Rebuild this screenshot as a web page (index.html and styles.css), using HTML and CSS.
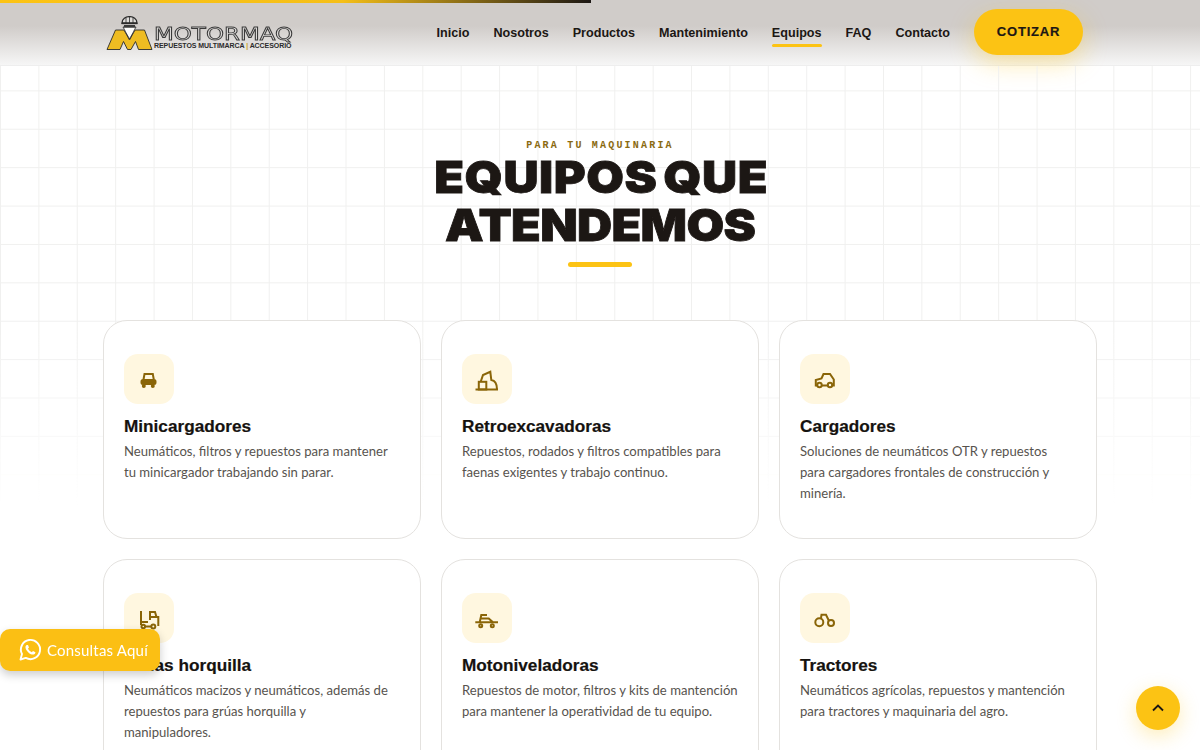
FILE: index.html
```html
<!DOCTYPE html>
<html lang="es">
<head>
    <meta charset="UTF-8">
    <meta name="viewport" content="width=device-width, initial-scale=1.0">
    <title>Motormaq - Equipos</title>
    <link rel="stylesheet" href="styles.css">
</head>
<body>
    <div class="progress"></div>
    <header class="site-header">
        <a class="logo" href="#">
            <svg class="logo-mark" viewBox="0 0 47 34" width="47" height="34">
                <path d="M1 33.5 L9.5 14 H18 L23.5 24 L29 14 H38.5 L46 33.5 H32.5 L29.5 25.5 L25 33.5 H21.5 L17.5 25.5 L14 33.5 Z" fill="#eebc22" stroke="#2b2b2b" stroke-width="0.9"/>
                <path d="M17 11 C18 13 19 14 19 15 L23.5 23 L28 15 C28 14 29 13 30 11 Z" fill="#fdfdfb" stroke="#2b2b2b" stroke-width="0.9"/>
                <path d="M16 7 C16 -1.5 31 -1.5 31 7 Z" fill="#dedcda" stroke="#2b2b2b" stroke-width="1.3"/>
                <path d="M23.5 0.5 V7 M20 1.5 V7 M27 1.5 V7" stroke="#2b2b2b" stroke-width="0.8"/>
                <path d="M15.5 7.5 H31.5" stroke="#2b2b2b" stroke-width="1.3"/>
                <path d="M18 9 H29 V11.5 H18 Z" fill="#3a3a3a"/>
            </svg>
            <span class="logo-text">
                <span class="logo-name">MOTORMAQ</span>
                <span class="logo-sub">REPUESTOS MULTIMARCA <i>|</i> ACCESORIO</span>
            </span>
        </a>
        <nav class="menu">
            <a href="#">Inicio</a>
            <a href="#">Nosotros</a>
            <a href="#">Productos</a>
            <a href="#">Mantenimiento</a>
            <a href="#" class="active">Equipos</a>
            <a href="#">FAQ</a>
            <a href="#">Contacto</a>
        </nav>
        <a class="quote-btn" href="#">COTIZAR</a>
    </header>

    <main class="equipment">
        <div class="grid-lines"></div>
        <p class="eyebrow">PARA TU MAQUINARIA</p>
        <h1 class="title">
            <span class="title-top">EQUIPOS QUE</span>
            <span class="title-bottom">ATENDEMOS</span>
        </h1>
        <div class="title-bar"></div>

        <section class="cards">
            <article class="card">
                <div class="card-icon">
                    <svg viewBox="0 0 24 24"><path d="M6.5 12.5 L7.5 7 H15.8 L16.8 12.5"/><rect x="4.5" y="13" width="14" height="4" rx="1.5" fill="#8a6508"/><circle cx="6.8" cy="19" r="1"/><circle cx="15.8" cy="19" r="1"/></svg>
                </div>
                <h3>Minicargadores</h3>
                <p>Neumáticos, filtros y repuestos para mantener tu minicargador trabajando sin parar.</p>
            </article>
            <article class="card">
                <div class="card-icon">
                    <svg viewBox="0 0 24 24"><path d="M0.5 22.5 H23"/><rect x="3.8" y="14.8" width="7.5" height="7.7"/><path d="M5.7 14.7 L8 8 L15.3 4.8 L16.3 13 C19.5 13.5 22 17 22 22.5"/></svg>
                </div>
                <h3>Retroexcavadoras</h3>
                <p>Repuestos, rodados y filtros compatibles para faenas exigentes y trabajo continuo.</p>
            </article>
            <article class="card">
                <div class="card-icon">
                    <svg viewBox="0 0 24 24"><path d="M4 18.5 H2.8 V13 L8.5 11.5 L10.5 7 H17 L20.8 12.5 V18.5 H19.5 M9 18.5 H14.5"/><circle cx="6.5" cy="18" r="2.2"/><circle cx="17" cy="18" r="2.2"/></svg>
                </div>
                <h3>Cargadores</h3>
                <p>Soluciones de neumáticos OTR y repuestos<br>para cargadores frontales de construcción y<br>minería.</p>
            </article>
            <article class="card">
                <div class="card-icon">
                    <svg viewBox="0 0 24 24"><path d="M4 5 V19 M4 16 H11 M13 14 V6 H18 L19.5 11 H21.3 V20 M13 11 H19.5 M9 20.5 H14"/><circle cx="6.3" cy="20.5" r="1.8"/><circle cx="16.3" cy="20.5" r="2"/></svg>
                </div>
                <h3>Grúas horquilla</h3>
                <p>Neumáticos macizos y neumáticos, además de<br>repuestos para grúas horquilla y<br>manipuladores.</p>
            </article>
            <article class="card">
                <div class="card-icon">
                    <svg viewBox="0 0 24 24"><path d="M0.3 16.3 H23 M4.7 16.3 L6.3 9 H12 M6 12.5 H13.7 L18 16.3"/><circle cx="5.7" cy="19.7" r="1.5"/><circle cx="17.3" cy="19.7" r="1.5"/></svg>
                </div>
                <h3>Motoniveladoras</h3>
                <p>Repuestos de motor, filtros y kits de mantención para mantener la operatividad de tu equipo.</p>
            </article>
            <article class="card">
                <div class="card-icon">
                    <svg viewBox="0 0 24 24"><circle cx="6.3" cy="16.3" r="4"/><circle cx="18" cy="17" r="3"/><path d="M8 12 L8.5 8.8 H13 L15.8 14.5"/></svg>
                </div>
                <h3>Tractores</h3>
                <p>Neumáticos agrícolas, repuestos y mantención para tractores y maquinaria del agro.</p>
            </article>
        </section>
    </main>

    <a class="whatsapp" href="#">
        <svg viewBox="0 0 24 24" width="24" height="24">
            <path d="M2.5 21.5 L4 16 A9.6 9.6 0 1 1 7.8 19.9 Z" fill="none" stroke="#fff" stroke-width="1.9" stroke-linejoin="round"/>
            <path d="M8.6 6.9 C8 7.4 7.3 8.3 7.5 9.7 C7.8 11.6 9.3 13.6 10.9 14.9 C12.4 16.1 14.2 16.9 15.6 16.5 C16.7 16.2 17.4 15.4 17.4 14.3 L15 13 L13.8 14.2 C12.2 13.6 10.7 12.1 10 10.5 L11 9.4 L10 6.9 Z" fill="#fff"/>
        </svg>
        Consultas Aquí
    </a>
    <a class="to-top" href="#">
        <svg viewBox="0 0 24 24" width="20" height="20"><path d="M6 15 L12 9 L18 15"/></svg>
    </a>
</body>
</html>
```

FILE: styles.css
```css
html, body {
    height: 100%;
    overflow: hidden;
}

body {
    margin: 0;
    background-color: #ffffff;
    color: #1c1714;
    font-family: "Liberation Sans", Arial, sans-serif;
}

a {
    text-decoration: none;
    color: inherit;
}

.progress {
    position: absolute;
    top: 0;
    left: 0;
    z-index: 5;
    width: 591px;
    height: 3px;
    background: linear-gradient(90deg, #fcc314 0%, #f5bf18 58%, #1c1714 100%);
}

.site-header {
    display: flex;
    align-items: center;
    justify-content: space-between;
    height: 65px;
    padding: 0 117px 0 106px;
    border-bottom: 1px solid #eeeeee;
    background: linear-gradient(180deg, #d0ccc9 0%, #d0ccc9 40%, #f6f6f6 100%);
}

.logo {
    display: flex;
    align-items: flex-end;
    gap: 1px;
    height: 34px;
}

.logo-text {
    display: flex;
    flex-direction: column;
    color: #2b2b2b;
    width: 139px;
}

.logo-name {
    display: inline-block;
    font-family: "DejaVu Sans", sans-serif;
    font-size: 17px;
    line-height: 15px;
    color: #dcdad8;
    -webkit-text-stroke: 0.8px #3a3a3a;
    transform: scaleX(1.35);
    transform-origin: left center;
    white-space: nowrap;
}

.logo-sub {
    font-size: 7px;
    font-weight: 700;
    line-height: 8px;
    letter-spacing: -0.07px;
    white-space: nowrap;
}

.logo-sub i {
    color: #c9a118;
    font-style: normal;
}

.menu {
    display: flex;
    gap: 24px;
    margin-left: auto;
    margin-right: 24px;
}

.menu a {
    position: relative;
    font-size: 12.6px;
    font-weight: 700;
    line-height: 18px;
    color: #1c1714;
}

.menu a.active::after {
    content: "";
    position: absolute;
    left: 0;
    right: 0;
    bottom: -5px;
    height: 3px;
    border-radius: 2px;
    background-color: #fcc314;
}

.quote-btn {
    display: flex;
    align-items: center;
    justify-content: center;
    width: 109px;
    height: 46px;
    margin-top: -2px;
    border-radius: 23px;
    background-color: #fcc314;
    box-shadow: 0 8px 24px rgba(252, 195, 20, 0.35);
    font-size: 13px;
    font-weight: 700;
    letter-spacing: 0.8px;
    -webkit-text-stroke: 0.2px #1c1714;
}

.equipment {
    position: relative;
    padding-top: 73px;
}

.grid-lines {
    position: absolute;
    top: 0;
    left: 0;
    right: 0;
    height: 440px;
    background-image:
        linear-gradient(#f0f0ef 1px, transparent 1px),
        linear-gradient(90deg, #f0f0ef 1px, transparent 1px);
    background-size: 38.4px 38.4px;
    background-position: 0 -14px;
    -webkit-mask-image: linear-gradient(180deg, #000 60%, transparent 100%);
    mask-image: linear-gradient(180deg, #000 60%, transparent 100%);
}

.eyebrow, .title, .title-bar, .cards {
    position: relative;
}

.eyebrow {
    margin: 0;
    text-align: center;
    font-family: "Liberation Mono", monospace;
    font-size: 10px;
    font-weight: 700;
    line-height: 14px;
    letter-spacing: 2.2px;
    color: #8a6a10;
}

.title {
    width: fit-content;
    margin: 1px auto 0;
    padding-left: 2px;
    text-align: center;
    font-family: Inter, sans-serif;
    font-size: 44px;
    font-weight: 900;
    line-height: 47.5px;
    color: #1c1714;
    -webkit-text-stroke: 0.8px #1c1714;
    transform: scaleX(1.105);
}

.title span {
    display: block;
}

.title-top {
    letter-spacing: 0.5px;
    word-spacing: -4px;
}

.title-bottom {
    margin-left: -2px;
    letter-spacing: -0.6px;
}

.title-bar {
    width: 64px;
    height: 5px;
    margin: 13px auto 0;
    border-radius: 3px;
    background-color: #fcc314;
}

.cards {
    display: grid;
    grid-template-columns: repeat(3, 318px);
    gap: 20px;
    justify-content: center;
    margin-top: 53px;
}

.card {
    box-sizing: border-box;
    height: 219px;
    padding: 33px 20px 0;
    border: 1px solid #e4e2df;
    border-radius: 24px;
    background-color: #ffffff;
}

.card-icon {
    display: flex;
    align-items: center;
    justify-content: center;
    width: 50px;
    height: 50px;
    border-radius: 14px;
    background-color: #fff7e0;
}

.card-icon svg {
    width: 24px;
    height: 24px;
    fill: none;
    stroke: #8a6508;
    stroke-width: 2;
}

.card h3 {
    margin: 12px 0 0;
    font-size: 17.2px;
    font-weight: 700;
    line-height: 20px;
    color: #15120f;
    -webkit-text-stroke: 0.2px #15120f;
}

.card p {
    margin: 5px 0 0;
    font-family: Lato, sans-serif;
    font-size: 13.1px;
    line-height: 21px;
    color: #57534e;
}

.whatsapp {
    position: fixed;
    left: 0;
    top: 629px;
    display: flex;
    align-items: center;
    gap: 5px;
    box-sizing: border-box;
    width: 160px;
    height: 42px;
    padding-left: 18px;
    border-radius: 10px;
    background-color: #fbbf14;
    box-shadow: 0 4px 10px rgba(0, 0, 0, 0.2);
    font-family: Lato, sans-serif;
    font-size: 15px;
    letter-spacing: 0.2px;
    color: #ffffff;
}

.to-top {
    position: fixed;
    left: 1136px;
    top: 686px;
    display: flex;
    align-items: center;
    justify-content: center;
    width: 44px;
    height: 44px;
    border-radius: 50%;
    background-color: #fcc314;
    box-shadow: 0 6px 20px rgba(252, 195, 20, 0.3);
}

.to-top svg {
    fill: none;
    stroke: #1c1714;
    stroke-width: 2.2;
}
```
